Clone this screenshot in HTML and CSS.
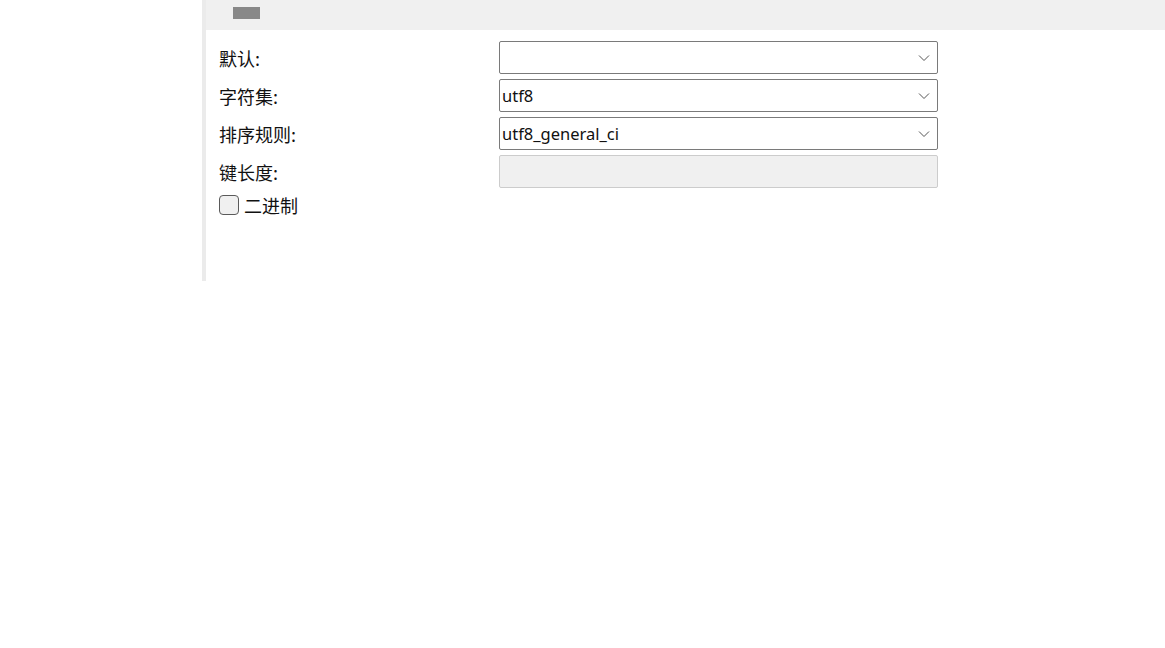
FILE: index.html
```html
<!DOCTYPE html>
<html>
  <head>
    <meta charset="UTF-8" />
    <title>字段属性</title>
    <link rel="stylesheet" href="styles.css">
  </head>
  <body>
    <div class="layout">
      <div class="sidebar"></div>
      <div class="panel">
        <div class="toolbar">
          <span class="tool-handle"></span>
        </div>
        <div class="form">
          <div class="form-row">
            <label class="form-label">默认:</label>
            <div class="select">
              <span class="select-value"></span>
              <svg class="chevron" viewBox="0 0 12 8" width="12" height="8">
                <path d="M1 1.5l5 5 5-5" fill="none" stroke="#555" stroke-width="1" />
              </svg>
            </div>
          </div>
          <div class="form-row">
            <label class="form-label">字符集:</label>
            <div class="select">
              <span class="select-value">utf8</span>
              <svg class="chevron" viewBox="0 0 12 8" width="12" height="8">
                <path d="M1 1.5l5 5 5-5" fill="none" stroke="#555" stroke-width="1" />
              </svg>
            </div>
          </div>
          <div class="form-row">
            <label class="form-label">排序规则:</label>
            <div class="select">
              <span class="select-value">utf8_general_ci</span>
              <svg class="chevron" viewBox="0 0 12 8" width="12" height="8">
                <path d="M1 1.5l5 5 5-5" fill="none" stroke="#555" stroke-width="1" />
              </svg>
            </div>
          </div>
          <div class="form-row">
            <label class="form-label">键长度:</label>
            <div class="text-field disabled"></div>
          </div>
          <label class="check-row">
            <span class="checkbox"></span>
            <span class="check-label">二进制</span>
          </label>
        </div>
      </div>
    </div>
  </body>
</html>
```

FILE: styles.css
```css
* {
  margin: 0;
  padding: 0;
  box-sizing: border-box;
}

body {
  font-family: "Noto Sans CJK SC", "Noto Sans", sans-serif;
  font-size: 18px;
  color: #111;
  background: white;
}

.layout {
  display: flex;
}

.sidebar {
  width: 202px;
  flex-shrink: 0;
}

.panel {
  flex: 1;
  height: 281px;
  border-left: 4px solid #ebebeb;
}

.toolbar {
  height: 30px;
  background: #f0f0f0;
  padding: 7px 0 0 27px;
}

.tool-handle {
  display: block;
  width: 27px;
  height: 12px;
  background: #888;
}

.form {
  padding: 11px 0 0 13px;
}

.form-row {
  display: flex;
  align-items: center;
  margin-bottom: 5px;
}

.form-label {
  width: 280px;
  flex-shrink: 0;
  padding-top: 1px;
  line-height: 24px;
}

.select,
.text-field {
  width: 439px;
  height: 33px;
  border: 1px solid #7a7a7a;
  border-radius: 2px;
  background: white;
  display: flex;
  align-items: center;
  padding: 0 7px 0 2px;
}

.select-value {
  flex: 1;
  font-family: "Noto Sans", sans-serif;
  font-size: 16.5px;
  line-height: 24px;
}

.text-field.disabled {
  background: #f0f0f0;
  border-color: #cccccc;
}

.check-row {
  display: flex;
  align-items: center;
  gap: 5px;
  margin-top: 4px;
}

.checkbox {
  width: 20px;
  height: 20px;
  border: 1px solid #5a5a5a;
  border-radius: 4px;
  background: #f0f0f0;
}

.check-label {
  line-height: 24px;
}
```
